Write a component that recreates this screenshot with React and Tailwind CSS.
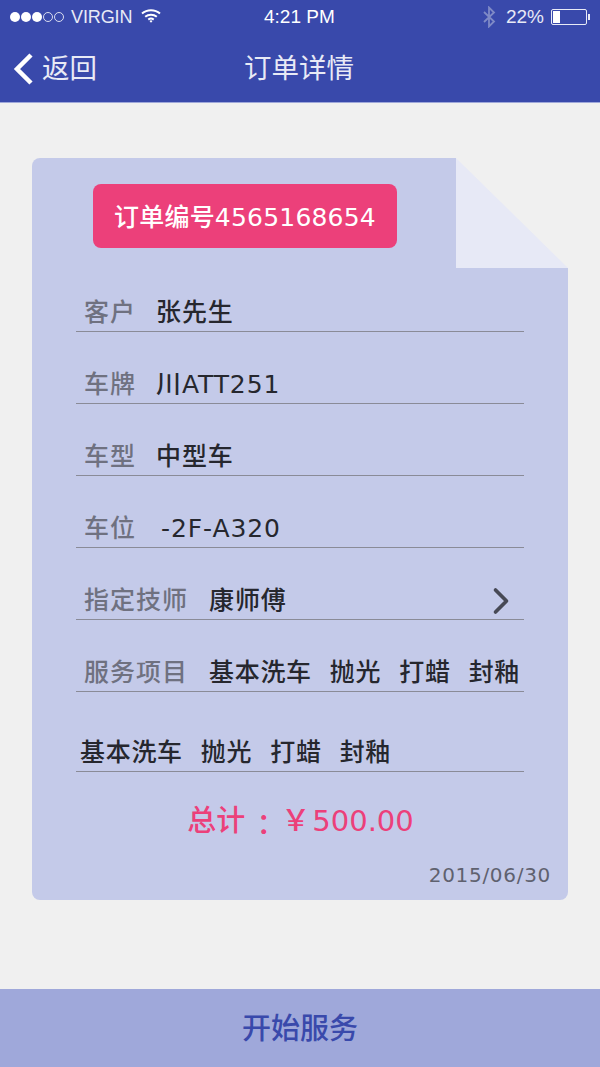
import { ChevronRight } from "lucide-react";

const cjk = "font-['DejaVu_Sans','Noto_Sans_CJK_SC',sans-serif]";

const Row = ({ label, labelClass = "w-[72px]", children, right, height = "h-[72px]" }) => (
  <div className={`${height} flex items-end border-b border-[#8a8b97]`}>
    <div className="flex h-[40px] w-full items-center pl-2 pt-[3px]">
      {label && <span className={`${labelClass} shrink-0 text-[25px] font-medium tracking-[1px] text-[#6f7180]`}>{label}</span>}
      {children}
      {right}
    </div>
  </div>
);

const Services = () => (
  <div className="flex gap-[18px] text-[25px] font-medium tracking-[0.7px] text-[#26272e]">
    <span>基本洗车</span>
    <span>抛光</span>
    <span>打蜡</span>
    <span>封釉</span>
  </div>
);

const Value = ({ children, className = "" }) => (
  <span className={`text-[25px] font-medium tracking-[0.9px] text-[#26272e] ${className}`}>{children}</span>
);

const StatusBar = () => (
  <div className="relative flex h-[32px] items-center justify-between px-[10px] font-['Liberation_Sans',sans-serif] text-[19px] text-[#e8eaf6]">
    <div className="flex items-center">
      <div className="flex gap-[1px]">
        {[0, 1, 2].map((i) => (
          <span key={i} className="h-[10px] w-[10px] rounded-full bg-white" />
        ))}
        {[0, 1].map((i) => (
          <span key={i} className="h-[10px] w-[10px] rounded-full border border-white/80" />
        ))}
      </div>
      <span className="ml-[7px] text-[18px] tracking-[-0.1px]">VIRGIN</span>
      <svg className="ml-[9px] -mt-[3px]" width="20" height="16" viewBox="0 0 20 16" fill="none" stroke="white" strokeWidth="2">
        <path d="M1 5.5C6 1 14 1 19 5.5" />
        <path d="M4.2 8.8C7.5 6 12.5 6 15.8 8.8" />
        <path d="M7.3 11.6C9 10.3 11 10.3 12.7 11.6" />
        <path d="M8.6 13.2L10 11.9L11.4 13.2L10 14.8Z" fill="white" stroke="none" />
      </svg>
    </div>
    <span className="absolute left-[264px] font-medium text-white">4:21 PM</span>
    <div className="flex items-center">
      <svg width="16" height="22" viewBox="0 0 16 22" fill="none" stroke="#7f8ac6" strokeWidth="1.8">
        <path d="M3 6L13 15.5L8 20.5V1.5L13 6.5L3 16" />
      </svg>
      <span className="ml-[9px]">22%</span>
      <div className="ml-[7px] flex items-center">
        <div className="h-[16px] w-[36px] rounded-[2px] border border-[#e8eaf6] p-[1px]">
          <div className="h-full w-[7px] bg-white" />
        </div>
        <div className="ml-[1px] h-[6px] w-[2px] bg-[#e8eaf6]" />
      </div>
    </div>
  </div>
);

export default function App() {
  return (
    <div className={`flex h-[1067px] w-[600px] flex-col bg-[#f0f0f0] ${cjk}`}>
      {/* Header */}
      <div className="h-[103px] border-b border-[#9fa8da] bg-[#3949ab] pt-[1px]">
        <StatusBar />
        <div className="relative flex h-[70px] items-center justify-center pr-[2px] pt-[1px] text-[27.5px] text-[#e8eaf6]">
          <div className="absolute left-[13px] flex items-center">
            <svg width="20" height="32" viewBox="0 0 20 32" fill="none" stroke="white" strokeWidth="4.5">
              <path d="M18 2L4 16L18 30" />
            </svg>
            <span className="ml-[9px]">返回</span>
          </div>
          <span>订单详情</span>
        </div>
      </div>

      {/* Card */}
      <div className="relative mx-[32px] mt-[55px] h-[742px] rounded-[8px] bg-[#c4cae9]">
        <svg className="absolute right-0 top-0" width="112" height="110" viewBox="0 0 112 110">
          <rect width="112" height="110" fill="#f0f0f0" />
          <path d="M0 0L112 110H0Z" fill="#e7e9f6" />
        </svg>

        <div className="ml-[61px] pt-[26px]">
          <div className="flex h-[64px] w-[304px] items-center justify-center rounded-[8px] bg-[#ec407a] pt-[3px] text-[25px] font-medium tracking-[0.2px] text-white">
            订单编号4565168654
          </div>
        </div>

        <div className="mx-[44px]">
          <Row label="客户" height="h-[84px]">
            <Value>张先生</Value>
          </Row>
          <Row label="车牌">
            <Value>川ATT251</Value>
          </Row>
          <Row label="车型">
            <Value>中型车</Value>
          </Row>
          <Row label="车位">
            <Value className="ml-[5px]">-2F-A320</Value>
          </Row>
          <Row
            label="指定技师"
            labelClass="w-[125px]"
            right={<ChevronRight className="ml-auto mr-[1px] h-[44px] w-[44px] shrink-0 text-[#474955]" strokeWidth={2} />}
          >
            <Value>康师傅</Value>
          </Row>
          <Row label="服务项目" labelClass="w-[125px]">
            <Services />
          </Row>
          <Row height="h-[80px]">
            <div className="-ml-[4px]">
              <Services />
            </div>
          </Row>
        </div>

        <div className="mt-[28px] flex justify-center pl-[1px] text-[29px] font-medium text-[#ec407a]">
          <span>总计</span>
          <span className="ml-[4px] translate-y-[2px] font-['Noto_Sans_CJK_TC',sans-serif]">：</span>
          <span className="ml-[3px]">￥</span>
          <span className="ml-[2px]">500.00</span>
        </div>
        <div className="mt-[16px] pr-[17px] text-right text-[20px] tracking-[0.7px] text-[#5f616f]">2015/06/30</div>
      </div>

      {/* Bottom button */}
      <div className="mt-auto flex h-[78px] items-center justify-center bg-[#9fa8da] pt-[3px] text-[29px] font-medium text-[#3949ab]">
        开始服务
      </div>
    </div>
  );
}
